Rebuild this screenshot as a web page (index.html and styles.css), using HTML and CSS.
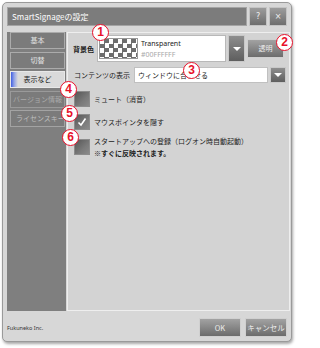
FILE: index.html
```html
<!DOCTYPE html>
<html lang="ja">
<head>
<meta charset="utf-8">
<link rel="stylesheet" href="styles.css">
</head>
<body>
<div class="win">
  <div class="titlerow">
    <div class="title">SmartSignageの設定</div>
    <div class="tbtn">?</div>
    <div class="tbtn">×</div>
  </div>
  <div class="main">
    <div class="side">
      <div class="tab tab-on">基本</div>
      <div class="tab tab-on">切替</div>
      <div class="tab tab-sel">表示など</div>
      <div class="tab tab-off">バージョン情報</div>
      <div class="tab tab-off2">ライセンスキー</div>
    </div>
    <div class="panel">
      <div class="row row-bg">
        <div class="label bold">背景色</div>
        <div class="colorbox">
          <div class="checker"></div>
          <div class="colortext">
            <div class="cname">Transparent</div>
            <div class="chex">#00FFFFFF</div>
          </div>
        </div>
        <div class="dropbtn tall"><span class="tri"></span></div>
        <div class="btn btn-clear">透明</div>
      </div>
      <div class="row row-disp">
        <div class="label">コンテンツの表示</div>
        <div class="select">ウィンドウに合わせる</div>
        <div class="dropbtn short"><span class="tri"></span></div>
      </div>
      <div class="cbrow cb1">
        <div class="cb"></div>
        <div class="cbtext">ミュート（消音）</div>
      </div>
      <div class="cbrow cb2">
        <div class="cb"><svg width="16" height="16" viewBox="0 0 16 16"><polyline points="4.5,8.5 7,11 11.5,4.5" fill="none" stroke="#ffffff" stroke-width="1.6"/></svg></div>
        <div class="cbtext">マウスポインタを隠す</div>
      </div>
      <div class="cbrow cb3">
        <div class="cb"></div>
        <div class="cbtext">スタートアップへの登録（ログオン時自動起動）<br><span class="bold">※すぐに反映されます。</span></div>
      </div>
    </div>
  </div>
  <div class="foot">
    <div class="company">Fukuneko Inc.</div>
    <div class="btns">
      <div class="btn btn-foot">OK</div>
      <div class="btn btn-foot">キャンセル</div>
    </div>
  </div>
</div>
<div class="mark m1">1</div>
<div class="mark m2">2</div>
<div class="mark m3">3</div>
<div class="mark m4">4</div>
<div class="mark m5">5</div>
<div class="mark m6">6</div>
</body>
</html>
```
FILE: styles.css
```css
html, body {
  margin: 0;
  padding: 0;
  background: #ffffff;
}
body {
  position: relative;
  width: 300px;
  height: 348px;
  overflow: hidden;
  font-family: "Noto Sans CJK JP", "Noto Sans", sans-serif;
  color: #222222;
}
.win {
  margin: 2px 0 0 2px;
  width: 290px;
  height: 340px;
  box-sizing: border-box;
  border: 1px solid #9a9a9a;
  border-radius: 5px;
  background: #d7d7d7;
  box-shadow: 1px 2px 3px rgba(0, 0, 0, 0.35);
  padding: 4px 4px 0 4px;
  display: flex;
  flex-direction: column;
}
.titlerow {
  display: flex;
  height: 19px;
  gap: 2px;
}
.title {
  flex: 1;
  box-sizing: border-box;
  background: #7c7c7c;
  border: 1px solid #a4a4a4;
  color: #ffffff;
  font-family: "Noto Sans CJK JP", "Noto Sans", sans-serif;
  font-size: 8px;
  line-height: 17px;
  padding-left: 4px;
}
.tbtn {
  width: 18px;
  box-sizing: border-box;
  border: 1px solid #c4c4c4;
  background: linear-gradient(#9c9c9c, #6e6e6e);
  color: #f0f0f0;
  font-family: "DejaVu Sans", sans-serif;
  font-size: 8px;
  line-height: 17px;
  text-align: center;
}
.main {
  display: flex;
  margin-top: 6px;
  height: 279px;
}
.side {
  width: 59px;
  background: #7f7f7f;
  padding: 0 1px 0 3px;
  box-sizing: border-box;
  display: flex;
  flex-direction: column;
  gap: 2.5px;
}
.tab {
  height: 17px;
  box-sizing: border-box;
  border: 1px solid #a0a0a0;
  background: #7b7b7b;
  font-size: 7px;
  line-height: 15px;
  text-align: center;
  white-space: nowrap;
  overflow: hidden;
}
.tab-on {
  color: #e2e2e2;
  border-color: #ababab;
}
.tab-sel {
  background: linear-gradient(90deg, #3f5ee0 0px, #8fa0e6 3px, #dadada 7px, #dadada 100%);
  border-color: #e8e8e8;
  color: #1a1a1a;
}
.tab-off {
  color: #aaaaaa;
  border-color: #9a9a9a;
}
.tab-off2 {
  color: #bdbdbd;
  border-color: #a3a3a3;
  text-align: left;
  padding-left: 5px;
}
.panel {
  flex: 1;
  margin-left: 1px;
  box-sizing: border-box;
  border: 1px solid #eeeeee;
  background: #d3d3d3;
  padding: 2px 3px 0 5px;
}
.row {
  display: flex;
  align-items: center;
}
.label {
  font-size: 7px;
  white-space: nowrap;
}
.bold {
  font-weight: bold;
}
.row-bg .label {
  width: 24px;
}
.colorbox {
  width: 129px;
  height: 27px;
  box-sizing: border-box;
  background: #ffffff;
  border: 1px solid #b8b8b8;
  display: flex;
  align-items: center;
  padding-left: 1px;
}
.checker {
  width: 39px;
  height: 21px;
  background-color: #ffffff;
  background-image: conic-gradient(#6e6e6e 25%, #ffffff 0 50%, #6e6e6e 0 75%, #ffffff 0);
  background-size: 9px 9px;
  border: 1px solid #999999;
  box-sizing: border-box;
}
.colortext {
  margin-left: 3px;
  font-family: "Noto Sans", sans-serif;
  font-size: 7px;
  line-height: 11px;
}
.cname {
  color: #222222;
}
.chex {
  color: #a8a8a8;
}
.dropbtn {
  box-sizing: border-box;
  border: 1px solid #c8c8c8;
  background: linear-gradient(#8e8e8e, #5e5e5e);
  display: flex;
  align-items: center;
  justify-content: center;
}
.tall {
  width: 17px;
  height: 27px;
  margin-left: 2px;
}
.short {
  width: 16px;
  height: 16px;
  margin-left: 2px;
}
.tri {
  width: 0;
  height: 0;
  border-left: 4px solid transparent;
  border-right: 4px solid transparent;
  border-top: 4px solid #ffffff;
}
.btn {
  box-sizing: border-box;
  border: 1px solid #d0d0d0;
  background: linear-gradient(#a2a2a2, #6c6c6c);
  color: #ececec;
  font-size: 7px;
  text-align: center;
}
.btn-clear {
  width: 37px;
  height: 19px;
  line-height: 17px;
  margin-left: 2px;
}
.row-disp {
  margin-top: 5px;
}
.row-disp .label {
  width: 60px;
  margin-left: 1px;
}
.select {
  width: 134px;
  height: 16px;
  box-sizing: border-box;
  background: #ffffff;
  border: 1px solid #c0c0c0;
  font-size: 7px;
  line-height: 14px;
  padding-left: 3px;
  white-space: nowrap;
}
.cbrow {
  display: flex;
  align-items: center;
  margin-left: 1px;
}
.cb1 {
  margin-top: 8px;
}
.cb2 {
  margin-top: 7px;
}
.cb3 {
  margin-top: 5px;
}
.cb {
  width: 16px;
  height: 16px;
  box-sizing: border-box;
  border: 1px solid #8c8c8c;
  background: linear-gradient(135deg, #565656, #7a7a7a 60%, #8a8a8a);
  flex: none;
}
.cb svg {
  display: block;
  margin: -1px;
}
.cbtext {
  margin-left: 4px;
  font-size: 7px;
  line-height: 12px;
  white-space: nowrap;
}
.foot {
  display: flex;
  align-items: center;
  justify-content: space-between;
  margin-top: 7px;
}
.company {
  font-family: "Noto Sans", sans-serif;
  font-size: 5.5px;
  color: #333333;
}
.btns {
  display: flex;
  gap: 4px;
}
.btn-foot {
  width: 42px;
  height: 19px;
  line-height: 17px;
  font-size: 7.5px;
}
.mark {
  position: absolute;
  width: 17px;
  height: 17px;
  box-sizing: border-box;
  border: 1.5px solid #e8102a;
  border-radius: 50%;
  background: #ffffff;
  color: #e8102a;
  font-family: "Liberation Sans", sans-serif;
  font-weight: bold;
  font-size: 12px;
  line-height: 14px;
  text-align: center;
}
.m1 { left: 92px; top: 24px; }
.m2 { left: 276px; top: 34px; }
.m3 { left: 183px; top: 62px; }
.m4 { left: 60px; top: 81px; }
.m5 { left: 61px; top: 105px; }
.m6 { left: 62px; top: 129px; }
```
